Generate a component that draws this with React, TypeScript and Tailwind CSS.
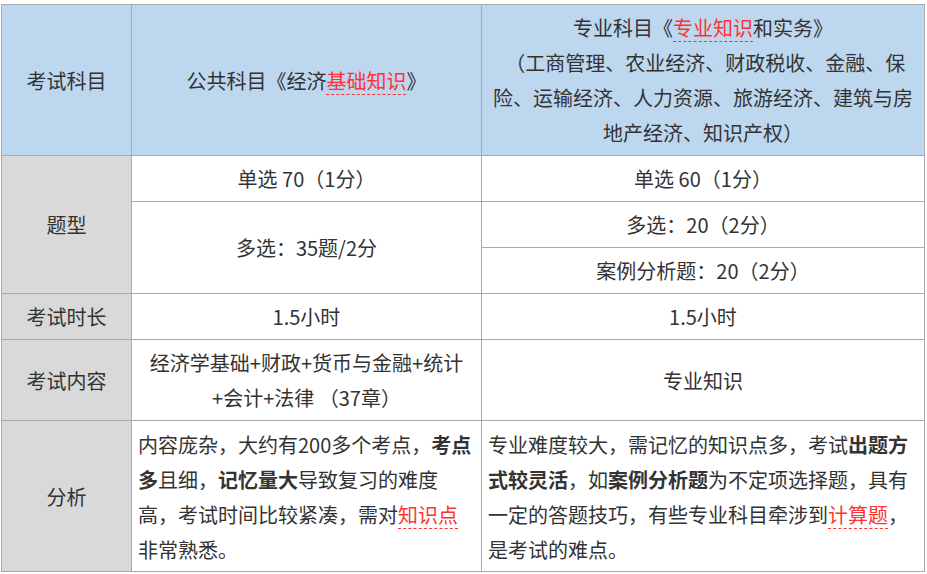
import React from "react";

const Red = ({ children }: { children: React.ReactNode }) => (
  <span className="text-[#f33] underline decoration-dashed decoration-[#f33] decoration-1 underline-offset-[5px]">
    {children}
  </span>
);

const B = ({ children }: { children: React.ReactNode }) => (
  <span className="font-bold">{children}</span>
);

const Cell = ({
  children,
  className = "",
}: {
  children: React.ReactNode;
  className?: string;
}) => (
  <div
    className={`flex flex-col items-center justify-center text-center bg-white ${className}`}
  >
    {children}
  </div>
);

export default function App() {
  return (
    <div
      className="w-[927px] h-[574px] bg-white pt-[4px] pl-[1px] text-[20px] leading-[35px] text-[#333]"
      style={{ fontFamily: '"Noto Sans CJK SC", "Noto Sans", sans-serif' }}
    >
      <div className="grid w-[924px] grid-cols-[129px_349px_442px] grid-rows-[150px_45px_45px_45px_45px_80px_150px] gap-px bg-[#aaa] p-px">
        {/* header */}
        <Cell className="!bg-[#bdd7ee]">考试科目</Cell>
        <Cell className="!bg-[#bdd7ee]">
          <div>
            公共科目《经济<Red>基础知识</Red>》
          </div>
        </Cell>
        <Cell className="!bg-[#bdd7ee]">
          <div className="whitespace-nowrap">
            专业科目《<Red>专业知识</Red>和实务》
          </div>
          <div className="whitespace-nowrap">&nbsp;（工商管理、农业经济、财政税收、金融、保</div>
          <div className="whitespace-nowrap">险、运输经济、人力资源、旅游经济、建筑与房</div>
          <div className="whitespace-nowrap">地产经济、知识产权）</div>
        </Cell>

        {/* 题型 */}
        <Cell className="!bg-[#d9d9d9] row-span-3">题型</Cell>
        <Cell>单选 70（1分）</Cell>
        <Cell>单选 60（1分）</Cell>
        <Cell className="row-span-2">多选：35题/2分</Cell>
        <Cell>多选：20（2分）</Cell>
        <Cell>案例分析题：20（2分）</Cell>

        {/* 考试时长 */}
        <Cell className="!bg-[#d9d9d9]">考试时长</Cell>
        <Cell>1.5小时</Cell>
        <Cell>1.5小时</Cell>

        {/* 考试内容 */}
        <Cell className="!bg-[#d9d9d9]">考试内容</Cell>
        <Cell>
          <div className="whitespace-nowrap">经济学基础+财政+货币与金融+统计</div>
          <div className="whitespace-nowrap">+会计+法律 （37章）</div>
        </Cell>
        <Cell>专业知识</Cell>

        {/* 分析 */}
        <Cell className="!bg-[#d9d9d9]">分析</Cell>
        <div className="flex flex-col justify-center bg-white pl-[6px] pt-[2px] text-left">
          <div className="whitespace-nowrap">
            内容庞杂，大约有200多个考点，<B>考点</B>
          </div>
          <div className="whitespace-nowrap">
            <B>多</B>且细，<B>记忆量大</B>导致复习的难度
          </div>
          <div className="whitespace-nowrap">
            高，考试时间比较紧凑，需对<Red>知识点</Red>
          </div>
          <div className="whitespace-nowrap">非常熟悉。</div>
        </div>
        <div className="flex flex-col justify-center bg-white pl-[6px] pt-[2px] text-left">
          <div className="whitespace-nowrap">
            专业难度较大，需记忆的知识点多，考试<B>出题方</B>
          </div>
          <div className="whitespace-nowrap">
            <B>式较灵活</B>，如<B>案例分析题</B>为不定项选择题，具有
          </div>
          <div className="whitespace-nowrap">
            一定的答题技巧，有些专业科目牵涉到<Red>计算题</Red>，
          </div>
          <div className="whitespace-nowrap">是考试的难点。</div>
        </div>
      </div>
    </div>
  );
}
